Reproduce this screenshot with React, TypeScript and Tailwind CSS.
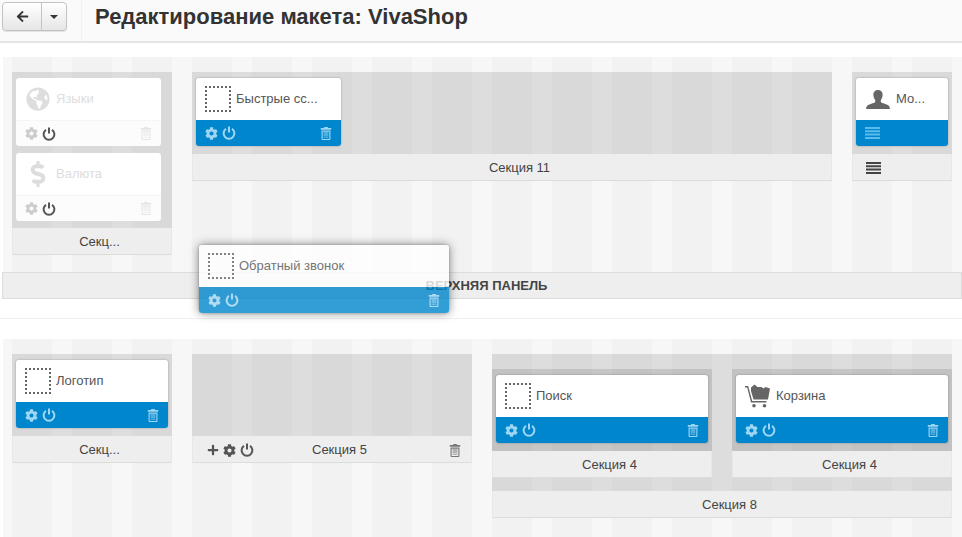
import { FaArrowLeft, FaCog, FaDollarSign, FaGlobeAmericas, FaPlus } from "react-icons/fa";

const stripes =
  "bg-[repeating-linear-gradient(90deg,#f7f7f7_0,#f7f7f7_9px,#f2f2f2_9px,#f2f2f2_49px,#f7f7f7_49px,#f7f7f7_60px)]";

const Power = ({ className = "" }: { className?: string }) => (
  <svg viewBox="0 0 14 14" width="14" height="14" className={className} fill="none" stroke="currentColor" strokeWidth="2">
    <path d="M4 2.800a5.400 5.400 0 1 0 6 0" />
    <path d="M7 0.500v6" />
  </svg>
);

const Trash = ({ className = "" }: { className?: string }) => (
  <svg viewBox="0 0 12 14" width="12" height="13" className={className} fill="currentColor">
    <path d="M4 0h4v1.200h3.600v1.800H.4V1.200H4z" />
    <path fillRule="evenodd" d="M1.200 3.800h9.600V13a1 1 0 0 1-1 1H2.200a1 1 0 0 1-1-1zM2.400 5v7.800h7.200V5zM3.400 6h5.200v1H3.400zm0 2.200h5.200v1H3.400zm0 2.200h5.200v1H3.400z" />
  </svg>
);

const Bars = ({ className = "" }: { className?: string }) => (
  <svg viewBox="0 0 15 12" width="15" height="12" className={className} fill="currentColor">
    <path d="M0 0h15v2H0zM0 3.300h15v2H0zM0 6.600h15v2H0zM0 9.900h15v2H0z" />
  </svg>
);

const Dotted = () => (
  <div className="w-[26px] h-[26px] border-2 border-dotted border-[#666]" />
);

const Person = () => (
  <svg viewBox="0 0 24 19" width="24" height="19" fill="#666">
    <path d="M12 0c3 0 4.800 2.200 4.600 5.200-.1 1.800-.8 3.600-1.800 4.800v2c1 1.300 6.600 2 8.200 4 .5.700.9 2 1 3H0c.1-1 .5-2.300 1-3 1.600-2 7.200-2.700 8.200-4v-2C8.200 8.800 7.500 7 7.400 5.200 7.200 2.200 9 0 12 0z" />
  </svg>
);

const Cart = () => (
  <svg viewBox="0 0 26 24" width="26" height="24" fill="#666">
    <path d="M0 2h3.200l4 15h14.300v1.500H6L2.200 3.500H0z" />
    <path d="M6 7V3.500l3.500-3 3 2.500h4l2 1.500 2-1.500L25 4.500 23 15.500H8.500z" />
    <circle cx="9" cy="21.800" r="1.800" />
    <circle cx="19.500" cy="21.800" r="1.800" />
  </svg>
);

type CardProps = {
  title: string;
  icon: React.ReactNode;
  width: string;
  off?: boolean;
  bars?: boolean;
};

const Card = ({ title, icon, width, off, bars }: CardProps) => (
  <div className={`${width} h-[68px] rounded-[3px] overflow-hidden ${off ? "" : "shadow-[0_0_2px_rgba(0,0,0,0.35)]"}`}>
    <div className={`h-[42px] bg-white flex items-center pl-[9px] text-[13px] ${off ? "text-[#ddd]" : "text-[#555]"}`}>
      <div className="w-[26px] flex justify-center shrink-0">{icon}</div>
      <span className="ml-[5px] whitespace-nowrap">{title}</span>
    </div>
    {off ? (
      <div className="h-[26px] bg-[#fcfcfc] border-t border-[#f5f5f5] flex items-center px-[9px]">
        <FaCog size={13} className="text-[#ccc]" />
        <Power className="ml-[4px] text-[#555]" />
        <Trash className="ml-auto text-[#e6e6e6]" />
      </div>
    ) : (
      <div className="h-[26px] bg-[#0086cc] flex items-center px-[9px] text-[#9ed6f3]">
        {bars ? (
          <Bars className="text-[#5bbcec]" />
        ) : (
          <>
            <FaCog size={13} />
            <Power className="ml-[4px]" />
            <Trash className="ml-auto" />
          </>
        )}
      </div>
    )}
  </div>
);

const Label = ({ children }: { children: React.ReactNode }) => (
  <div className="h-[27px] bg-[#eee] border-x border-x-[#e8e8e8] border-b border-b-[#dcdcdc] flex items-center justify-center pl-[15px] pt-[2px] text-[13px] text-[#444]">
    {children}
  </div>
);

export default function App() {
  return (
    <div className="relative w-[962px] h-[537px] overflow-hidden bg-white font-['Liberation_Sans',Arial,sans-serif]">
      {/* Header */}
      <div className="h-[43px] bg-[#fafafa] border-b-2 border-[#e4e4e4] flex pl-[2px]">
        <div className="mt-[2px] h-[29px] w-[65px] flex rounded-[4px] border border-[#c4c4c4] bg-gradient-to-b from-white to-[#e6e6e6] shadow-[0_1px_1px_rgba(0,0,0,0.1)]">
          <div className="w-[39px] flex items-center justify-center border-r border-[#c4c4c4]">
            <FaArrowLeft size={13} className="text-[#333]" />
          </div>
          <div className="flex-1 flex items-center justify-center">
            <div className="border-x-4 border-x-transparent border-t-4 border-t-[#333]" />
          </div>
        </div>
        <div className="ml-[14px] w-px h-[41px] bg-[#f2f2f2]" />
        <h1 className="ml-[13px] pt-[4px] text-[22px] leading-[26px] font-bold text-[#333] whitespace-nowrap">
          Редактирование макета: VivaShop
        </h1>
      </div>

      {/* Top grid */}
      <div className={`mt-[14px] ml-[3px] h-[215px] pl-[9px] pt-[15px] flex items-start gap-5 ${stripes}`}>
        <div className="w-[160px]">
          <div className="bg-black/10 h-[156px] pt-[6px] pl-[4px] flex flex-col gap-[7px]">
            <Card width="w-[145px]" off title="Языки" icon={<FaGlobeAmericas size={24} className="text-[#ddd]" />} />
            <Card width="w-[145px]" off title="Валюта" icon={<FaDollarSign size={26} className="text-[#ddd]" />} />
          </div>
          <Label>Секц...</Label>
        </div>
        <div className="w-[640px]">
          <div className="bg-black/10 h-[82px] pt-[6px] pl-[4px]">
            <Card width="w-[145px]" title="Быстрые сс..." icon={<Dotted />} />
          </div>
          <Label>Секция 11</Label>
        </div>
        <div className="w-[100px]">
          <div className="bg-black/10 h-[82px] pt-[6px] pl-[4px]">
            <Card width="w-[92px]" bars title="Мо..." icon={<Person />} />
          </div>
          <div className="h-[27px] bg-[#eee] border-x border-x-[#e8e8e8] border-b border-b-[#dcdcdc] flex items-center pl-[13px] pt-[2px] text-[#444]">
            <Bars />
          </div>
        </div>
      </div>

      <div className="ml-[2px] h-[27px] bg-[#eee] border border-[#ddd] flex items-center justify-center pl-[9px] text-[13px] font-bold text-[#444]">
        ВЕРХНЯЯ ПАНЕЛЬ
      </div>
      <div className="h-[20px] border-b border-[#f0f0f0]" />

      {/* Bottom grid */}
      <div className={`mt-[20px] ml-[3px] h-[198px] pl-[9px] pt-[15px] flex items-start gap-5 ${stripes}`}>
        <div className="w-[160px]">
          <div className="bg-black/10 h-[82px] pt-[6px] pl-[4px]">
            <Card width="w-[152px]" title="Логотип" icon={<Dotted />} />
          </div>
          <Label>Секц...</Label>
        </div>
        <div className="w-[280px]">
          <div className="bg-black/10 h-[82px]" />
          <div className="h-[27px] bg-[#eee] border-x border-x-[#e8e8e8] border-b border-b-[#dcdcdc] flex items-center pl-[14px] pr-[10px] pt-[2px] text-[13px] text-[#444]">
            <div className="w-[105px] flex items-center gap-[4px] text-[#555]">
              <FaPlus size={12} />
              <FaCog size={13} />
              <Power />
            </div>
            <span>Секция 5</span>
            <Trash className="ml-auto text-[#777]" />
          </div>
        </div>
        <div className="w-[460px]">
          <div className="bg-black/10 h-[137px] pt-[15px] flex gap-5">
            {[
              { title: "Поиск", icon: <Dotted /> },
              { title: "Корзина", icon: <Cart /> },
            ].map((c) => (
              <div key={c.title} className="w-[220px]">
                <div className="bg-black/10 h-[82px] pt-[6px] pl-[4px]">
                  <Card width="w-[212px]" title={c.title} icon={c.icon} />
                </div>
                <Label>Секция 4</Label>
              </div>
            ))}
          </div>
          <Label>Секция 8</Label>
        </div>
      </div>

      {/* Module being dragged */}
      <div className="absolute left-[199px] top-[245px] opacity-80 rounded-[3px] shadow-[0_0_10px_rgba(0,0,0,0.6)]">
        <Card width="w-[250px]" title="Обратный звонок" icon={<Dotted />} />
      </div>
    </div>
  );
}
